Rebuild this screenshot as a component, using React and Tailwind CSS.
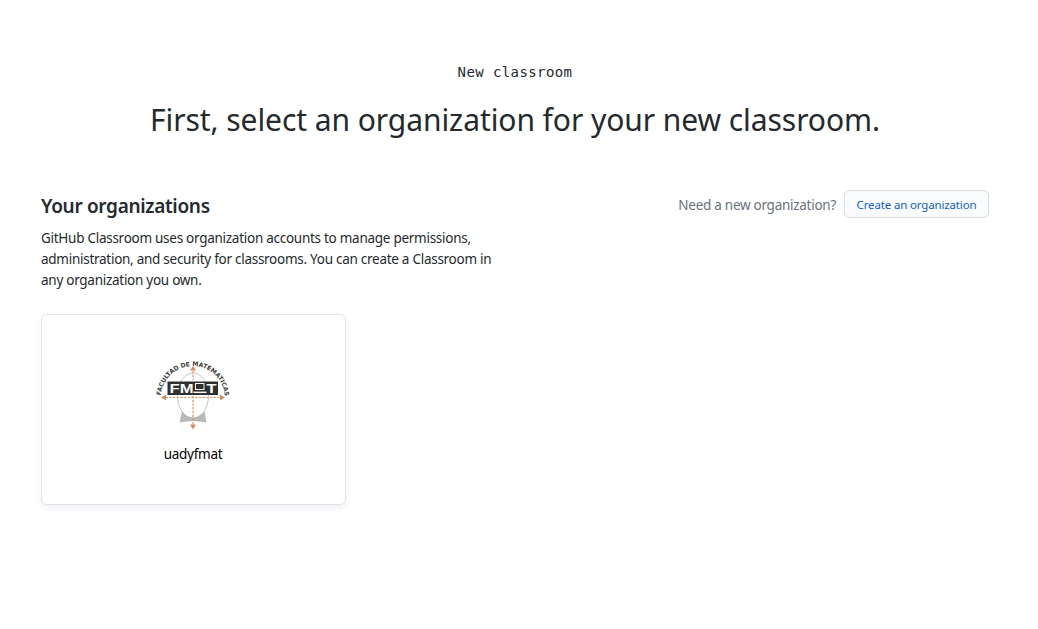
function FmatLogo() {
  return (
    <svg viewBox="0.5 0 90 84" width="90" height="84" role="img" aria-label="uadyfmat" className="-ml-px overflow-visible">
      <defs>
        <path id="arc" d="M13.300 46 A32 32 0 0 1 77.300 46" />
      </defs>
      <text fill="#3c3c3c" fontSize="6.2" fontWeight="700" fontFamily="'DejaVu Sans', sans-serif">
        <textPath href="#arc" startOffset="2.5" textLength="96" lengthAdjust="spacingAndGlyphs">FACULTAD DE MATEMÁTICAS</textPath>
      </text>
      <ellipse cx="45.5" cy="43.5" rx="15.5" ry="22.5" fill="#fff" stroke="#c6c6c6" strokeWidth="1" />
      <path d="M34.500 59.500 Q39.500 65.500 45.500 65.500 Q51.500 65.500 57 59.500 L59 70.500 Q45.500 67.500 32 70.500 Z" fill="#b9b9b9" />
      <rect x="20" y="29.500" width="50.500" height="13.500" fill="#303030" />
      <text x="22" y="41" fill="#fff" fontSize="13.500" fontWeight="700" textLength="24" lengthAdjust="spacingAndGlyphs" fontFamily="'Liberation Sans', Arial, sans-serif">FM</text>
      <text x="59" y="41" fill="#fff" fontSize="13.500" fontWeight="700" textLength="10" lengthAdjust="spacingAndGlyphs" fontFamily="'Liberation Sans', Arial, sans-serif">T</text>
      <rect x="48" y="31.500" width="8.500" height="6" fill="#303030" stroke="#f5f5f5" strokeWidth="1" />
      <path d="M46 40.300 H59" stroke="#f5f5f5" strokeWidth="1.500" />
      <path d="M45.500 19 V28 M45.500 44 V74 M18 45.500 H72" stroke="#d49a70" strokeWidth="1.200" strokeDasharray="2.500 1.200" fill="none" />
      <path d="M45.500 14 L48.500 18.500 H42.500 Z M45.500 77.500 L48.500 72.500 H42.500 Z M13.500 45.500 L18.500 42.500 V48.500 Z M77.500 45.500 L72.500 42.500 V48.500 Z" fill="#cf8e64" />
    </svg>
  );
}

export default function App() {
  return (
    <main className="min-h-[629px] w-[1038px] bg-white pl-[41px] pr-[49px] pt-[61px] font-['Noto_Sans',sans-serif] text-[#24292e]">
      <header className="text-center">
        <p className="pt-px font-['DejaVu_Sans_Mono',monospace] text-[14px] leading-[21px] tracking-[0.4px]">New classroom</p>
        <h1 className="mt-[13px] whitespace-nowrap text-[30px] font-normal leading-[48px] tracking-[-0.07px]">
          First, select an organization for your new classroom.
        </h1>
      </header>
      <section className="mt-[46px] flex items-start justify-between">
        <div>
          <h2 className="mt-[1px] text-[19px] font-semibold leading-[30px] tracking-[-0.32px]">Your organizations</h2>
          <p className="mt-[7px] whitespace-nowrap text-[13.5px] leading-[21px] tracking-[-0.27px]">
            GitHub Classroom uses organization accounts to manage permissions,
            <br />
            administration, and security for classrooms. You can create a Classroom in
            <br />
            any organization you own.
          </p>
        </div>
        <div className="flex items-center">
          <span className="mr-2 mt-[2px] whitespace-nowrap text-[13.5px] leading-[21px] tracking-[-0.27px] text-[#6a737d]">Need a new organization?</span>
          <button className="h-7 w-[145px] whitespace-nowrap rounded-md border border-[#d9dcdf] bg-[#fafbfc] pt-px text-[11.5px] leading-[18px] tracking-[-0.15px] text-[#1261bf]">
            Create an organization
          </button>
        </div>
      </section>
      <article className="mt-[23px] flex h-[191px] w-[305px] flex-col items-center rounded-md border border-[#e1e4e8] pt-[37px] shadow-[0_3px_6px_rgba(149,157,165,0.15)]">
        <FmatLogo />
        <p className="-ml-px mt-[8px] text-[13.5px] leading-[21px] tracking-[-0.27px] text-black">uadyfmat</p>
      </article>
    </main>
  );
}
